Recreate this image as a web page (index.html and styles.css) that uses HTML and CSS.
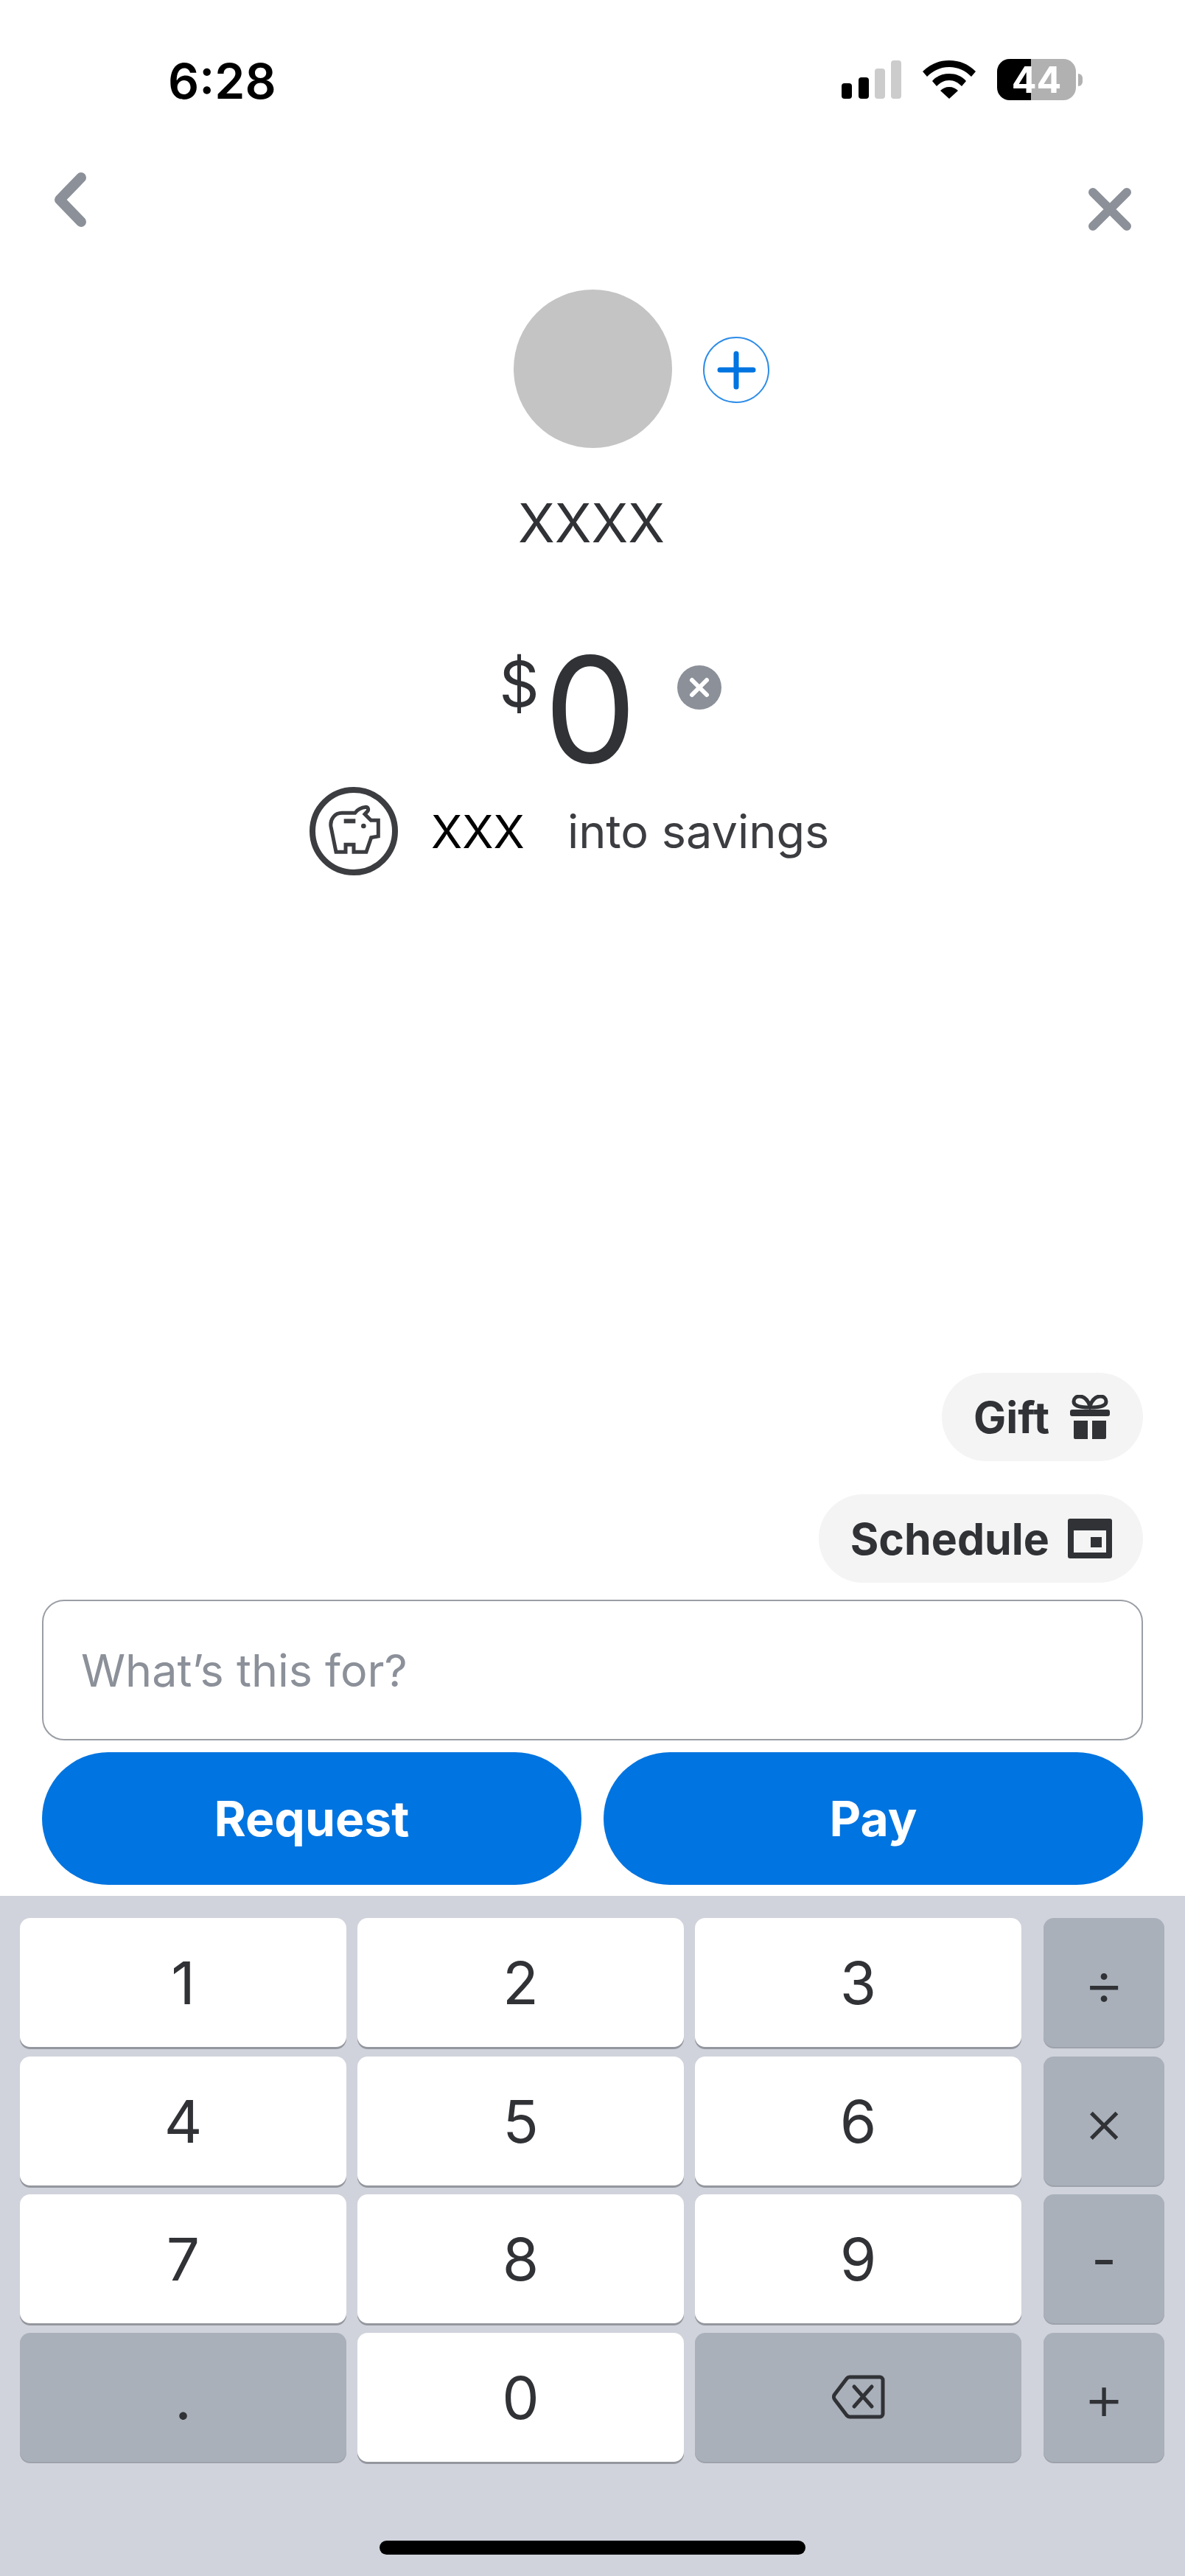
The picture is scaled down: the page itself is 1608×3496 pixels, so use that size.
FILE: index.html
```html
<!DOCTYPE html>
<html lang="en">
<head>
    <meta charset="UTF-8">
    <meta name="viewport" content="width=device-width, initial-scale=1.0">
    <title>Pay or Request</title>
    <link rel="stylesheet" href="styles.css">
</head>
<body>

<div class="phone">
    <div class="status">
        <span class="time">6:28</span>
        <div class="status-icons">
            <svg class="signal" width="82" height="52" viewBox="0 0 82 52">
                <rect x="0" y="31" width="14" height="21" rx="4" fill="#000"/>
                <rect x="23" y="23" width="14" height="29" rx="4" fill="#000"/>
                <rect x="45" y="11" width="14" height="41" rx="4" fill="#ccc"/>
                <rect x="67" y="0" width="14" height="52" rx="4" fill="#ccc"/>
            </svg>
            <svg class="wifi" width="72" height="52" viewBox="0 0 72 52">
                <path d="M36 0C22 0 10 5 0 15l6 7c8-8 18-13 30-13s22 5 30 13l6-7C62 5 50 0 36 0z" fill="#000"/>
                <path d="M36 18c-9 0-17 3-23 10l6 7c5-5 10-8 17-8s12 3 17 8l6-7c-6-7-14-10-23-10z" fill="#000"/>
                <path d="M36 36c-5 0-9 2-12 5l12 11 12-11c-3-3-7-5-12-5z" fill="#000"/>
            </svg>
            <div class="battery">
                <div class="battery-body">44</div>
                <div class="battery-cap"></div>
            </div>
        </div>
    </div>

    <div class="nav">
        <svg class="back" width="46" height="74" viewBox="0 0 46 74">
            <path d="M38 7L9 37l29 30" fill="none" stroke="#8b9099" stroke-width="14" stroke-linecap="round" stroke-linejoin="round"/>
        </svg>
        <svg class="close" width="58" height="58" viewBox="0 0 58 58">
            <path d="M6 6l46 46M52 6L6 52" fill="none" stroke="#8b9099" stroke-width="12" stroke-linecap="round"/>
        </svg>
    </div>

    <div class="recipient">
        <div class="avatar"></div>
        <svg class="add" width="90" height="90" viewBox="0 0 90 90">
            <circle cx="45" cy="45" r="44" fill="none" stroke="#2e8de8" stroke-width="2"/>
            <path d="M45 23v45M23 45h45" fill="none" stroke="#0074e0" stroke-width="7" stroke-linecap="round"/>
        </svg>
    </div>
    <div class="name">XXXX</div>

    <div class="amount">
        <span class="currency">$</span>
        <span class="value">0</span>
        <svg class="clear" width="60" height="60" viewBox="0 0 60 60">
            <circle cx="30" cy="30" r="30" fill="#8b9099"/>
            <path d="M20 20l20 20M40 20L20 40" fill="none" stroke="#fff" stroke-width="6" stroke-linecap="round"/>
        </svg>
    </div>

    <div class="savings">
        <svg width="120" height="120" viewBox="60 84 360 360">
            <circle cx="240" cy="264" r="168" fill="none" stroke="#3c3d41" stroke-width="24"/>
            <path d="M168 349L147 245c-4-30 16-55 45-55h53c10-14 28-22 45-24 8 0 12 10 6 17l-11 12 25 25h30v65l-29 5-20 59h-51v-30h-33v30z" fill="none" stroke="#3c3d41" stroke-width="15" stroke-linejoin="miter"/>
            <rect x="200" y="214" width="47" height="18" fill="#3c3d41"/>
            <circle cx="280" cy="243" r="10" fill="#3c3d41"/>
        </svg>
        <span class="savings-amt">XXX</span>
        <span class="savings-txt">into savings</span>
    </div>

    <div class="actions">
        <div class="pill">
            <span>Gift</span>
            <svg width="60" height="60" viewBox="0 0 60 60">
                <path d="M30 15c-3-8-8-13-14-13-5 0-8 3-8 7 0 5 5 8 22 8 17 0 22-3 22-8 0-4-3-7-8-7-6 0-11 5-14 13z" fill="none" stroke="#303236" stroke-width="5"/>
                <rect x="3" y="20" width="54" height="9" rx="3" fill="#303236"/>
                <path d="M8 35h19v25H10a2 2 0 0 1-2-2zM33 35h19v23a2 2 0 0 1-2 2H33z" fill="#303236"/>
            </svg>
        </div>
        <div class="pill">
            <span>Schedule</span>
            <svg width="60" height="54" viewBox="0 0 60 54">
                <path fill-rule="evenodd" d="M3 0h54a3 3 0 0 1 3 3v48a3 3 0 0 1-3 3H3a3 3 0 0 1-3-3V3a3 3 0 0 1 3-3zM8 16v30h44V16z" fill="#303236"/>
                <rect x="31" y="25" width="15" height="14" fill="#303236"/>
            </svg>
        </div>
        <div class="note">What’s this for?</div>
        <div class="buttons">
            <button class="btn">Request</button>
            <button class="btn">Pay</button>
        </div>
    </div>

    <div class="keyboard">
        <div class="keys">
            <button class="key">1</button>
            <button class="key">2</button>
            <button class="key">3</button>
            <button class="key dark op">÷</button>
            <button class="key">4</button>
            <button class="key">5</button>
            <button class="key">6</button>
            <button class="key dark op">×</button>
            <button class="key">7</button>
            <button class="key">8</button>
            <button class="key">9</button>
            <button class="key dark op minus">-</button>
            <button class="key dark">.</button>
            <button class="key">0</button>
            <button class="key dark">
                <svg width="72" height="60" viewBox="0 0 72 60">
                    <path d="M24 3h41a4 4 0 0 1 4 4v46a4 4 0 0 1-4 4H24a6 6 0 0 1-4-2L4 34a6 6 0 0 1 0-8L20 5a6 6 0 0 1 4-2z" fill="none" stroke="#303236" stroke-width="5" stroke-linejoin="round"/>
                    <path d="M30 16l24 27M54 16L30 43" fill="none" stroke="#303236" stroke-width="5" stroke-linecap="round"/>
                </svg>
            </button>
            <button class="key dark op">+</button>
        </div>
        <div class="home-bar"></div>
    </div>
</div>

</body>
</html>
```
FILE: styles.css
```css
* {
    box-sizing: border-box;
}
body {
    margin: 0;
    background: #fff;
    font-family: Inter, "Liberation Sans", sans-serif;
    color: #303236;
}
.phone {
    width: 1608px;
    height: 3496px;
    display: flex;
    flex-direction: column;
    overflow: hidden;
}

/* status bar */
.status {
    height: 234px;
    padding: 80px 139px 0 228px;
    display: flex;
    justify-content: space-between;
    align-items: flex-start;
}
.time {
    margin-top: 2px;
    font-size: 66px;
    line-height: 56px;
    font-weight: 600;
    color: #000;
}
.status-icons {
    display: flex;
    align-items: flex-start;
}
.signal {
    margin-top: 2px;
}
.wifi {
    margin: 2px 0 0 28px;
}
.battery {
    display: flex;
    align-items: center;
    margin-left: 29px;
}
.battery-body {
    width: 107px;
    height: 56px;
    border-radius: 17px;
    background: linear-gradient(90deg, #000 46px, #b1b1b1 46px);
    color: #fff;
    font-size: 50px;
    line-height: 56px;
    font-weight: 700;
    text-align: center;
}
.battery-cap {
    width: 6px;
    height: 17px;
    margin-left: 3px;
    border-radius: 0 6px 6px 0;
    background: #b1b1b1;
}

/* nav */
.nav {
    display: flex;
    justify-content: space-between;
    align-items: flex-start;
    padding: 0 73px 0 72px;
}
.close {
    margin-top: 21px;
}

/* recipient */
.recipient {
    margin-top: 80px;
    display: grid;
    grid-template-columns: 1fr 215px 1fr;
    align-items: center;
}
.avatar {
    grid-column: 2;
    width: 215px;
    height: 215px;
    border-radius: 50%;
    background: #c4c4c4;
}
.add {
    margin: 2px 0 0 42px;
}
.name {
    margin-top: 60px;
    padding-right: 3px;
    text-align: center;
    font-size: 73px;
    line-height: 84px;
}

/* amount */
.amount {
    margin-top: 110px;
    display: grid;
    grid-template-columns: 1fr auto 1fr;
    align-items: start;
}
.currency {
    justify-self: end;
    margin: 24px 12px 0 0;
    font-size: 85px;
    line-height: 85px;
}
.value {
    font-size: 200px;
    line-height: 200px;
    margin-left: -6px;
}
.clear {
    margin: 41px 0 0 55px;
}

/* savings */
.savings {
    margin-top: 6px;
    padding-left: 420px;
    display: flex;
    align-items: center;
}
.savings-amt {
    margin-left: 45px;
    font-size: 62px;
    color: #000;
}
.savings-txt {
    margin-left: 58px;
    font-size: 63px;
    color: #3c3d41;
}

/* bottom actions */
.actions {
    margin-top: auto;
    padding: 0 57px 15px;
    display: flex;
    flex-direction: column;
    align-items: flex-end;
}
.pill {
    height: 120px;
    margin-bottom: 45px;
    padding: 0 42px 0 43px;
    border-radius: 60px;
    background: #f4f4f4;
    display: flex;
    align-items: center;
    gap: 25px;
    font-size: 59px;
    font-weight: 700;
}
.pill:nth-child(2) {
    margin-bottom: 23px;
}
.note {
    width: 100%;
    height: 191px;
    padding-left: 51px;
    border: 2px solid #9a9ea5;
    border-radius: 30px;
    display: flex;
    align-items: center;
    font-size: 61px;
    color: #8b9099;
}
.buttons {
    width: 100%;
    margin-top: 16px;
    display: flex;
    gap: 30px;
}
.btn {
    flex: 1;
    height: 180px;
    border: 0;
    border-radius: 90px;
    background: #0074e0;
    color: #fff;
    font-family: inherit;
    font-size: 66px;
    font-weight: 700;
}

/* keyboard */
.keyboard {
    height: 923px;
    padding: 30px 0 0 27px;
    background: #d0d3db;
}
.keys {
    display: grid;
    grid-template-columns: 443px 443px 443px 179px;
    grid-auto-rows: 175px;
    gap: 12.67px 15px;
}
.key {
    padding: 0;
    border: 0;
    border-radius: 14px;
    background: #fff;
    box-shadow: 0 3px 0 #94979e;
    color: #303236;
    font-family: inherit;
    font-size: 80px;
    display: flex;
    align-items: center;
    justify-content: center;
}
.key.dark {
    background: #a9b0ba;
    box-shadow: 0 2px 0 #9da2ab;
}
.key.op {
    margin-left: 15px;
    font-size: 86px;
    font-weight: 300;
}
.key.op.minus {
    font-size: 74px;
    font-weight: 400;
}
.home-bar {
    width: 578px;
    height: 19px;
    margin: 107px 0 0 488px;
    border-radius: 10px;
    background: #000;
}
```
